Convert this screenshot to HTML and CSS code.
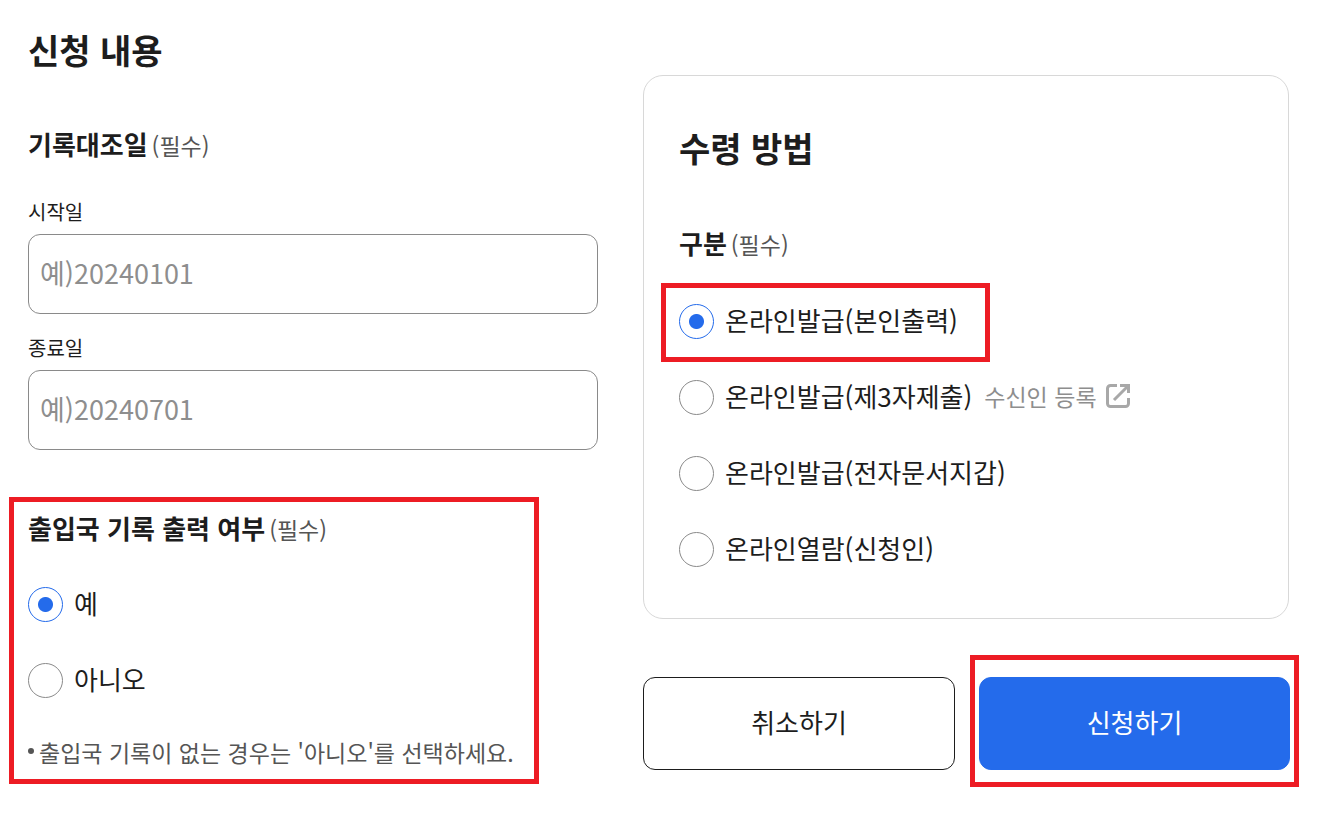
FILE: index.html
```html
<!DOCTYPE html>
<html lang="ko">
<head>
  <meta charset="UTF-8">
  <meta name="viewport" content="width=device-width, initial-scale=1">
  <title>신청 내용</title>
  <link rel="stylesheet" href="styles.css">
</head>
<body>

<form class="page">
  <section class="apply">
    <h1>신청 내용</h1>

    <div class="dates">
      <h2>기록대조일<span class="required">(필수)</span></h2>
      <label class="field-label" for="startDate">시작일</label>
      <input class="field" type="text" id="startDate" placeholder="예)20240101">
      <label class="field-label" for="endDate">종료일</label>
      <input class="field" type="text" id="endDate" placeholder="예)20240701">
    </div>

    <div class="record highlight">
      <h2>출입국 기록 출력 여부<span class="required">(필수)</span></h2>
      <label class="option"><input type="radio" name="record" checked>예</label>
      <label class="option"><input type="radio" name="record">아니오</label>
      <p class="note">출입국 기록이 없는 경우는 '아니오'를 선택하세요.</p>
    </div>
  </section>

  <section class="receive">
    <div class="panel">
      <h1>수령 방법</h1>
      <h2>구분<span class="required">(필수)</span></h2>
      <div class="option-row highlight">
        <label class="option"><input type="radio" name="method" checked>온라인발급(본인출력)</label>
      </div>
      <div class="option-row">
        <label class="option"><input type="radio" name="method">온라인발급(제3자제출)</label>
        <a class="receiver" href="#">수신인 등록
          <svg width="24" height="24" viewBox="0 0 24 24" fill="none" stroke="currentColor" stroke-width="3">
            <path d="M11 1.5H4.5a3 3 0 0 0-3 3v15a3 3 0 0 0 3 3h15a3 3 0 0 0 3-3V14M14 1.5h8.5V9M22 2L8 16"/>
          </svg>
        </a>
      </div>
      <div class="option-row">
        <label class="option"><input type="radio" name="method">온라인발급(전자문서지갑)</label>
      </div>
      <div class="option-row">
        <label class="option"><input type="radio" name="method">온라인열람(신청인)</label>
      </div>
    </div>

    <div class="buttons">
      <button type="button" class="btn btn-cancel">취소하기</button>
      <div class="submit highlight">
        <button type="submit" class="btn btn-primary">신청하기</button>
      </div>
    </div>
  </section>
</form>

</body>
</html>
```
FILE: styles.css
```css
* {
  box-sizing: border-box;
}

body {
  margin: 0;
  background: #fff;
  color: #1d1d1d;
  font-family: "Noto Sans CJK KR", sans-serif;
  font-size: 26px;
}

h1, h2, p {
  margin: 0;
}

h1 {
  font-size: 34px;
  line-height: 48px;
}

h2 {
  font-size: 26px;
  line-height: 36px;
}

.page {
  display: grid;
  grid-template-columns: 598fr 646fr;
  gap: 45px;
  padding: 26px 41px 24px 0;
}

.apply,
.receive {
  min-width: 0;
}

/* Red frame round the parts to fill in */
.highlight {
  border: 5px solid #ed1c24;
}

.required {
  margin-left: 4px;
  color: #555;
  font-size: 23px;
  font-weight: 400;
  line-height: 1;
}

.apply h1,
.dates {
  margin-left: 28px;
}

.dates h2 {
  margin: 52px 0 36px;
}

.field-label {
  display: block;
  margin-bottom: 8px;
  font-size: 20px;
  line-height: 28px;
}

.field {
  display: block;
  width: 100%;
  height: 80px;
  padding: 0 11px 4px;
  border: 1px solid #8a8a8a;
  border-radius: 12px;
  color: inherit;
  font: inherit;
  font-size: 27px;
}

.field + .field-label {
  margin-top: 20px;
}

.field::placeholder {
  color: #8e8e8e;
}

.option {
  display: flex;
  align-items: center;
  gap: 11px;
  line-height: 36px;
}

.option input {
  appearance: none;
  width: 35px;
  height: 35px;
  margin: 3px 0 0;
  border: 1px solid #8a8a8a;
  border-radius: 50%;
  background: #fff;
}

.option input:checked {
  border-color: #246beb;
  background: radial-gradient(circle, #246beb 7px, #fff 8px);
}

.record {
  width: fit-content;
  min-width: 530px;
  margin: 47px 0 0 9px;
  padding: 8px 8px 11px 14px;
}

.record .option {
  margin-top: 38px;
}

.note {
  display: flex;
  gap: 5px;
  margin-top: 38px;
  color: #555;
  font-size: 23px;
  line-height: 32px;
}

.note::before {
  content: "";
  width: 6px;
  height: 6px;
  margin-top: 12px;
  border-radius: 50%;
  background: #555;
}

.receive {
  padding-top: 49px;
}

.panel {
  padding: 48px 17px 32px;
  border: 1px solid #d8d8d8;
  border-radius: 20px;
}

.panel h1,
.panel h2 {
  margin-left: 18px;
}

.panel h2 {
  margin-top: 53px;
  margin-bottom: 22px;
}

.option-row {
  display: flex;
  align-items: center;
  gap: 12px;
  height: 76px;
  padding-left: 18px;
}

/* The frame overlaps the next row a little */
.option-row.highlight {
  width: 329px;
  height: 79px;
  margin-bottom: -4px;
  padding: 0 0 5px 13px;
}

.receiver {
  display: flex;
  align-items: center;
  gap: 9px;
  color: #8e8e8e;
  font-size: 23px;
  text-decoration: none;
}

.receiver svg {
  color: #a8a8a8;
}

.buttons {
  display: grid;
  grid-template-columns: 312fr 329fr;
  gap: 15px;
  align-items: end;
  margin: 36px -10px 0 0;
}

.btn {
  height: 93px;
  padding: 0 0 4px;
  border: 1px solid #1d1d1d;
  border-radius: 12px;
  background: #fff;
  color: inherit;
  font: inherit;
}

.btn-cancel {
  margin-bottom: 17px;
}

.submit {
  display: flex;
  padding: 17px 4px 12px;
}

.btn-primary {
  flex: 1;
  border-color: #246beb;
  background: #246beb;
  color: #fff;
}
```
